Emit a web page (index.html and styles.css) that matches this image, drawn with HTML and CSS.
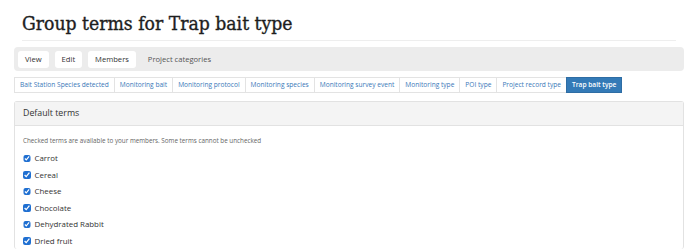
FILE: index.html
```html
<!DOCTYPE html>
<html lang="en">
<head>
    <meta charset="UTF-8">
    <title>Group terms for Trap bait type</title>
    <link rel="stylesheet" href="styles.css">
</head>
<body>
<div class="page">
    <div class="page-header">
        <h1>Group terms for Trap bait type</h1>
    </div>

    <div class="tab-bar">
        <a class="tab-btn">View</a>
        <a class="tab-btn">Edit</a>
        <a class="tab-btn">Members</a>
        <a class="tab-link">Project categories</a>
    </div>

    <ul class="vocab-tabs">
        <li>Bait Station Species detected</li>
        <li>Monitoring bait</li>
        <li>Monitoring protocol</li>
        <li>Monitoring species</li>
        <li>Monitoring survey event</li>
        <li>Monitoring type</li>
        <li>POI type</li>
        <li>Project record type</li>
        <li class="active">Trap bait type</li>
    </ul>

    <div class="panel">
        <div class="panel-heading">Default terms</div>
        <div class="panel-body">
            <p class="help">Checked terms are available to your members. Some terms cannot be unchecked</p>
            <label class="term"><input type="checkbox" checked> Carrot</label>
            <label class="term"><input type="checkbox" checked> Cereal</label>
            <label class="term"><input type="checkbox" checked> Cheese</label>
            <label class="term"><input type="checkbox" checked> Chocolate</label>
            <label class="term"><input type="checkbox" checked> Dehydrated Rabbit</label>
            <label class="term"><input type="checkbox" checked> Dried fruit</label>
        </div>
    </div>
</div>
</body>
</html>
```

FILE: styles.css
```css
* {
    margin: 0;
    padding: 0;
    box-sizing: border-box;
}
body {
    font-family: 'Open Sans', sans-serif;
    color: #333;
    background: #fff;
}
.page {
    margin: 0 6px 0 14px;
}
.page-header {
    margin: 0 8px;
    padding-top: 11px;
    border-bottom: 1px solid #eee;
    height: 41px;
}
h1 {
    font-family: 'DejaVu Serif Condensed', 'DejaVu Serif', serif;
    font-size: 19.2px;
    font-weight: normal;
    color: #1e1e1e;
    line-height: 26px;
    -webkit-text-stroke: 0.35px #1e1e1e;
}
.tab-bar {
    margin-top: 6px;
    height: 24px;
    background: #ececec;
    border-radius: 4px;
    padding: 4px;
    display: flex;
    align-items: center;
    gap: 6px;
    font-size: 7.6px;
}
.tab-btn {
    background: #fff;
    border-radius: 3px;
    height: 17px;
    line-height: 17px;
    padding: 0 7px;
    color: #333;
}
.tab-link {
    color: #555;
    padding: 0 6px;
}
.vocab-tabs {
    list-style: none;
    display: flex;
    margin-top: 6px;
    font-size: 6.6px;
}
.vocab-tabs li {
    height: 16px;
    line-height: 14px;
    padding: 0 5px;
    border: 1px solid #e3e3e3;
    margin-right: -1px;
    color: #3a78b8;
}
.vocab-tabs li.active {
    background: #337ab7;
    border-color: #2e6da4;
    color: #fff;
    font-weight: 600;
}
.panel {
    margin-top: 8px;
    border: 1px solid #e2e2e2;
    border-radius: 3px;
    border-bottom: none;
}
.panel-heading {
    height: 24px;
    line-height: 23px;
    padding: 0 8px;
    background: #f4f4f4;
    border-bottom: 1px solid #e2e2e2;
    font-size: 8.8px;
    color: #333;
}
.panel-body {
    padding: 10px 8px 0;
}
.help {
    font-size: 6.3px;
    color: #666;
    margin-bottom: 5px;
}
.term {
    display: flex;
    align-items: center;
    gap: 4px;
    height: 16.5px;
    font-size: 7.9px;
    color: #333;
}
.term input {
    width: 7.5px;
    height: 7.5px;
    margin: 0;
    accent-color: #1f6fd1;
}
```
